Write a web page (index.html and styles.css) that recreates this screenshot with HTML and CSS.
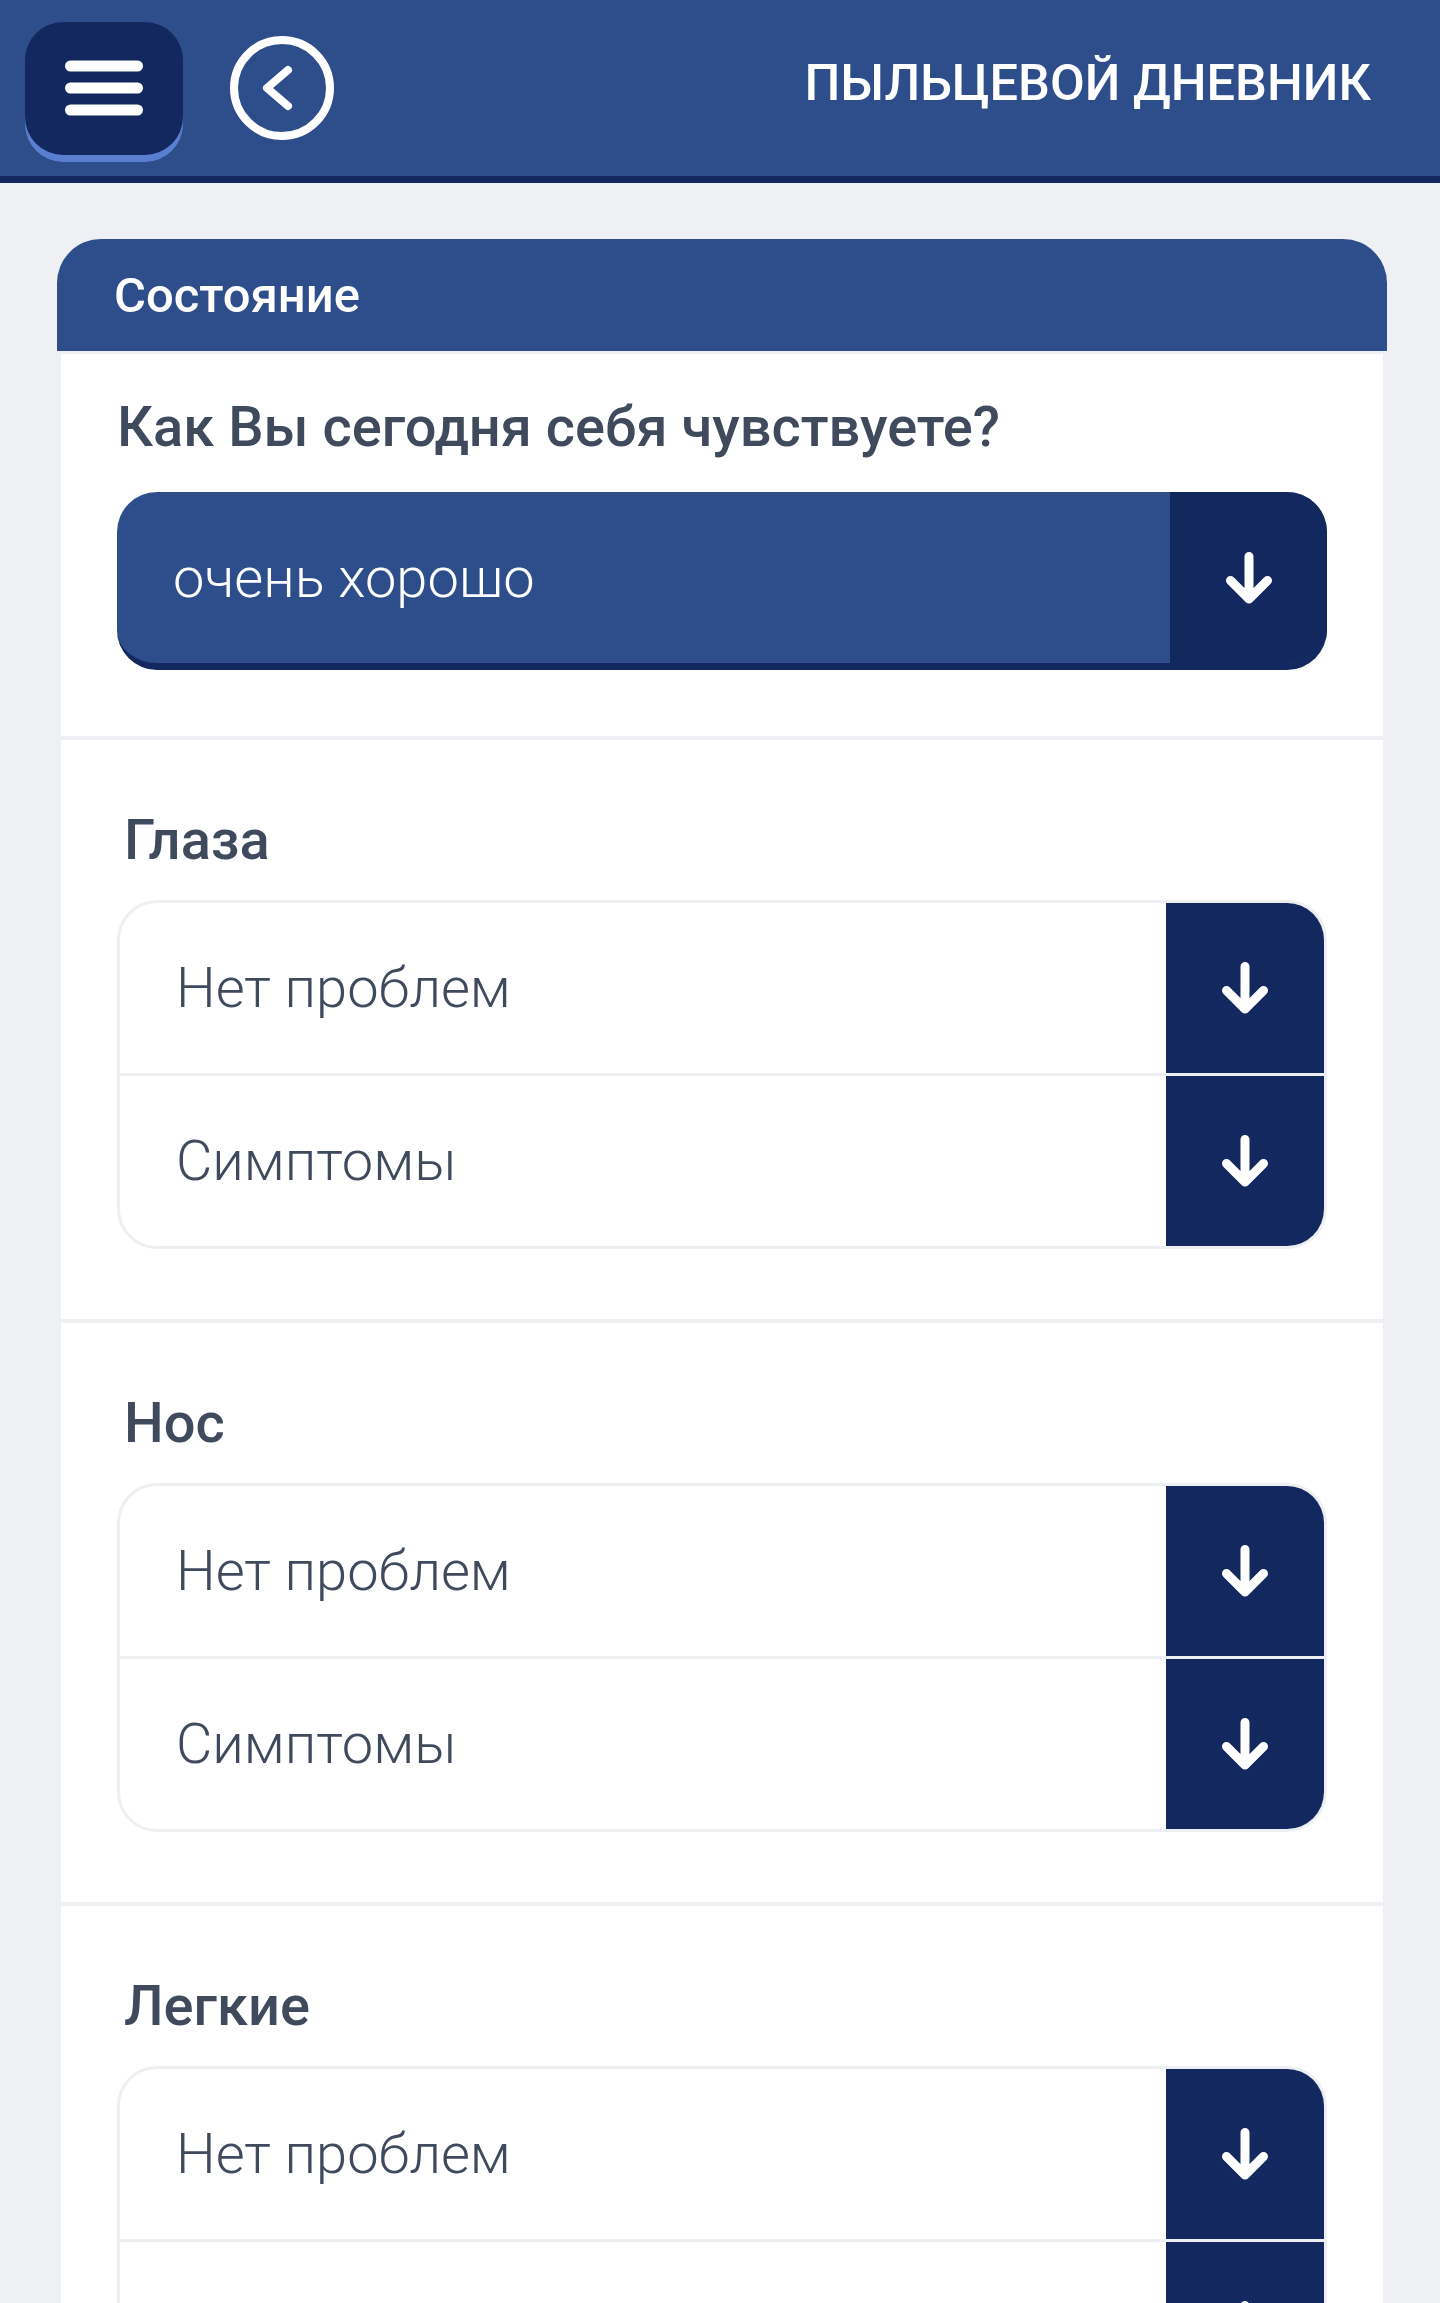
FILE: index.html
```html
<!DOCTYPE html>
<html>
<head>
    <title>Пыльцевой дневник</title>
    <link rel="stylesheet" href="styles.css">
</head>
<body>
    <div class="screen">
        <header class="topbar">
            <button class="menu-btn" aria-label="Меню">
                <svg width="78" height="56" viewBox="0 0 78 56">
                    <g stroke="#fff" stroke-width="11" stroke-linecap="round">
                        <line x1="5.5" y1="6" x2="72.5" y2="6"/>
                        <line x1="5.5" y1="28" x2="72.5" y2="28"/>
                        <line x1="5.5" y1="50" x2="72.5" y2="50"/>
                    </g>
                </svg>
            </button>
            <button class="back-btn" aria-label="Назад">
                <svg width="104" height="104" viewBox="0 0 104 104">
                    <circle cx="52" cy="52" r="48" fill="none" stroke="#fff" stroke-width="8"/>
                    <polyline points="58,34 37,52 58,70" fill="none" stroke="#fff" stroke-width="8" stroke-linecap="round" stroke-linejoin="round"/>
                </svg>
            </button>
            <h1 class="title">ПЫЛЬЦЕВОЙ ДНЕВНИК</h1>
        </header>

        <main class="content">
            <section class="card">
                <div class="card-head">Состояние</div>
                <div class="card-body">
                    <div class="panel panel-mood">
                        <h2 class="question">Как Вы сегодня себя чувствуете?</h2>
                        <div class="select">
                            <span class="select-value">очень хорошо</span>
                            <span class="select-btn">
                                <svg width="46" height="52" viewBox="0 0 46 52"><path d="M23 4.5V47M4.5 28.5L23 47L41.5 28.5" fill="none" stroke="#fff" stroke-width="9" stroke-linecap="round" stroke-linejoin="round"/></svg>
                            </span>
                        </div>
                    </div>

                    <div class="panel">
                        <h3 class="group-title">Глаза</h3>
                        <div class="options">
                            <div class="option">
                                <span class="option-label">Нет проблем</span>
                                <span class="option-btn"><svg width="46" height="52" viewBox="0 0 46 52"><path d="M23 4.5V47M4.5 28.5L23 47L41.5 28.5" fill="none" stroke="#fff" stroke-width="9" stroke-linecap="round" stroke-linejoin="round"/></svg></span>
                            </div>
                            <div class="option">
                                <span class="option-label">Симптомы</span>
                                <span class="option-btn"><svg width="46" height="52" viewBox="0 0 46 52"><path d="M23 4.5V47M4.5 28.5L23 47L41.5 28.5" fill="none" stroke="#fff" stroke-width="9" stroke-linecap="round" stroke-linejoin="round"/></svg></span>
                            </div>
                        </div>
                    </div>

                    <div class="panel">
                        <h3 class="group-title">Нос</h3>
                        <div class="options">
                            <div class="option">
                                <span class="option-label">Нет проблем</span>
                                <span class="option-btn"><svg width="46" height="52" viewBox="0 0 46 52"><path d="M23 4.5V47M4.5 28.5L23 47L41.5 28.5" fill="none" stroke="#fff" stroke-width="9" stroke-linecap="round" stroke-linejoin="round"/></svg></span>
                            </div>
                            <div class="option">
                                <span class="option-label">Симптомы</span>
                                <span class="option-btn"><svg width="46" height="52" viewBox="0 0 46 52"><path d="M23 4.5V47M4.5 28.5L23 47L41.5 28.5" fill="none" stroke="#fff" stroke-width="9" stroke-linecap="round" stroke-linejoin="round"/></svg></span>
                            </div>
                        </div>
                    </div>

                    <div class="panel">
                        <h3 class="group-title">Легкие</h3>
                        <div class="options">
                            <div class="option">
                                <span class="option-label">Нет проблем</span>
                                <span class="option-btn"><svg width="46" height="52" viewBox="0 0 46 52"><path d="M23 4.5V47M4.5 28.5L23 47L41.5 28.5" fill="none" stroke="#fff" stroke-width="9" stroke-linecap="round" stroke-linejoin="round"/></svg></span>
                            </div>
                            <div class="option">
                                <span class="option-label">Симптомы</span>
                                <span class="option-btn"><svg width="46" height="52" viewBox="0 0 46 52"><path d="M23 4.5V47M4.5 28.5L23 47L41.5 28.5" fill="none" stroke="#fff" stroke-width="9" stroke-linecap="round" stroke-linejoin="round"/></svg></span>
                            </div>
                        </div>
                    </div>
                </div>
            </section>
        </main>
    </div>
</body>
</html>
```

FILE: styles.css
```css
html, body {
    margin: 0;
    padding: 0;
    background: #eff0f4;
}
body {
    font-family: Roboto, "Liberation Sans", sans-serif;
    color: #404a5d;
}
.screen {
    height: 2303px;
    overflow: hidden;
}

/* top bar */
.topbar {
    display: flex;
    align-items: center;
    height: 176px;
    padding: 0 69px 0 25px;
    background: #2e4d8b;
    border-bottom: 7px solid #12285e;
}
.menu-btn {
    display: flex;
    align-items: center;
    justify-content: center;
    width: 158px;
    height: 133px;
    padding: 0;
    border: none;
    border-radius: 38px;
    background: #12285e;
    box-shadow: 0 7px 0 #5a7fd0;
}
.back-btn {
    display: flex;
    padding: 0;
    margin-left: 47px;
    border: none;
    background: none;
}
.title {
    margin: 0 0 0 auto;
    padding-bottom: 12px;
    font-size: 50.5px;
    font-weight: 500;
    color: #fff;
}

/* card */
.card {
    margin: 56px 53px 0 57px;
}
.card-head {
    display: flex;
    align-items: center;
    height: 112px;
    padding-left: 57px;
    border-radius: 44px 44px 0 0;
    background: #2e4d8b;
    color: #fff;
    font-size: 49px;
    font-weight: 500;
}
.card-body {
    display: flex;
    flex-direction: column;
    gap: 4px;
    padding: 3px 4px 0;
}
.panel {
    padding: 67px 56px 70px;
    background: #fff;
}
.panel-mood {
    padding: 40px 56px 66px;
}
.question, .group-title {
    margin: 0;
    font-size: 56px;
    line-height: 66px;
    font-weight: 500;
}
.question {
    margin-bottom: 32px;
}
.group-title {
    margin-bottom: 27px;
    padding-left: 7px;
}

/* select */
.select {
    display: flex;
    height: 178px;
    box-sizing: border-box;
    overflow: hidden;
    border-radius: 40px;
    border-bottom: 7px solid #12285e;
    background: #2e4d8b;
}
.select-value {
    flex: 1;
    display: flex;
    align-items: center;
    padding-left: 56px;
    color: #fff;
    font-size: 56px;
    font-weight: 300;
}
.select-btn, .option-btn {
    display: flex;
    align-items: center;
    justify-content: center;
    width: 157px;
    background: #12285e;
}

/* option list */
.options {
    overflow: hidden;
    border: 3px solid #eeeff2;
    border-radius: 40px;
}
.option {
    display: flex;
    height: 170px;
}
.option + .option {
    border-top: 3px solid #eeeff2;
}
.option-label {
    flex: 1;
    display: flex;
    align-items: center;
    padding-left: 56px;
    font-size: 56px;
    font-weight: 300;
}
.option-btn {
    width: 158px;
}
```
